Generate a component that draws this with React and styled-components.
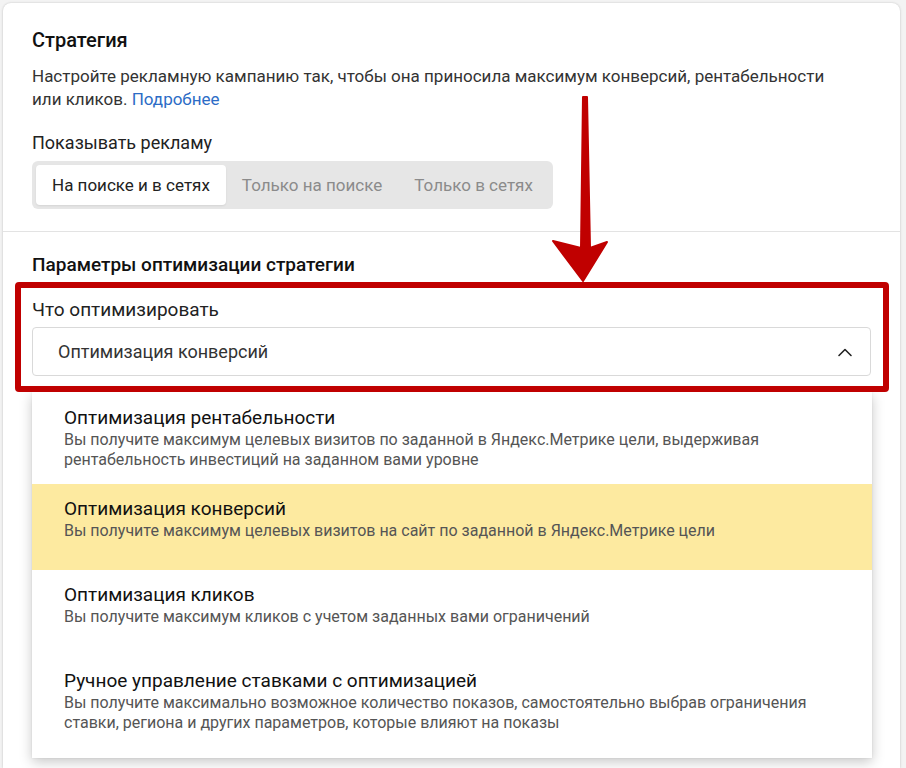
import React from "react";
import styled, { createGlobalStyle } from "styled-components";

const FONT = `Roboto, "Liberation Sans", Arial, sans-serif`;

const GlobalStyle = createGlobalStyle`
  * {
    box-sizing: border-box;
  }

  body {
    margin: 0;
    background-color: #f3f3f3;
    font-family: ${FONT};
    color: #000;
  }
`;

const SHOW_OPTIONS = ["На поиске и в сетях", "Только на поиске", "Только в сетях"];

const GOALS = [
  {
    title: "Оптимизация рентабельности",
    text: "Вы получите максимум целевых визитов по заданной в Яндекс.Метрике цели, выдерживая рентабельность инвестиций на заданном вами уровне",
  },
  {
    title: "Оптимизация конверсий",
    text: "Вы получите максимум целевых визитов на сайт по заданной в Яндекс.Метрике цели",
    selected: true,
  },
  {
    title: "Оптимизация кликов",
    text: "Вы получите максимум кликов с учетом заданных вами ограничений",
  },
  {
    title: "Ручное управление ставками с оптимизацией",
    text: "Вы получите максимально возможное количество показов, самостоятельно выбрав ограничения ставки, региона и других параметров, которые влияют на показы",
  },
];

function ChevronUp() {
  return (
    <svg width="16" height="10" viewBox="0 0 16 10" fill="none">
      <path
        d="M2 8.5L8 2.5L14 8.5"
        stroke="#222"
        strokeWidth="1.6"
        strokeLinecap="round"
        strokeLinejoin="round"
      />
    </svg>
  );
}

function RedArrow() {
  return (
    <Arrow width="60" height="192" viewBox="0 0 60 192">
      <path
        d="M33 5 L37 5 L40 156 L57 150 L33 189 L3 149 L31 156 Z"
        fill="#c00000"
        stroke="#c00000"
        strokeWidth="2"
        strokeLinejoin="round"
      />
    </Arrow>
  );
}

export default function App() {
  return (
    <>
      <GlobalStyle />
      <Page>
        <Card>
          <Section>
            <Heading>Стратегия</Heading>
            <Description>
              Настройте рекламную кампанию так, чтобы она приносила максимум
              конверсий, рентабельности или кликов. <Link href="#">Подробнее</Link>
            </Description>
            <Label>Показывать рекламу</Label>
            <Segmented>
              {SHOW_OPTIONS.map((option, index) => (
                <Segment key={option} $active={index === 0}>
                  {option}
                </Segment>
              ))}
            </Segmented>
          </Section>

          <Section $bottomless>
            <Heading $small>Параметры оптимизации стратегии</Heading>
            <Field>
              <Highlight />
              <Label $large>Что оптимизировать</Label>
              <Select>
                <span>Оптимизация конверсий</span>
                <ChevronUp />
              </Select>
              <Dropdown>
                {GOALS.map((goal) => (
                  <Option key={goal.title} $selected={goal.selected}>
                    <OptionTitle>{goal.title}</OptionTitle>
                    <OptionText>{goal.text}</OptionText>
                  </Option>
                ))}
              </Dropdown>
            </Field>
          </Section>

          <RedArrow />
        </Card>
      </Page>
    </>
  );
}

const Page = styled.div`
  padding: 3px 6px 0 3px;
`;

const Card = styled.div`
  position: relative;
  min-height: 765px;
  background-color: #fff;
  border-radius: 8px 8px 0 0;
  box-shadow: 0 0 2px rgba(0, 0, 0, 0.18), 0 1px 4px rgba(0, 0, 0, 0.06);
`;

const Section = styled.section`
  padding: ${({ $bottomless }) => ($bottomless ? "21px 29px 0" : "25px 29px 22px")};
  border-bottom: ${({ $bottomless }) => ($bottomless ? "none" : "1px solid #e3e3e3")};
`;

const Heading = styled.h2`
  margin: 0;
  font-size: ${({ $small }) => ($small ? "19px" : "20px")};
  line-height: 24px;
  font-weight: 500;
  color: #111;
`;

const Description = styled.p`
  margin: 13px 0 0;
  max-width: 820px;
  font-size: 17px;
  line-height: 23px;
  color: #333;
`;

const Link = styled.a`
  color: #2c6cc6;
  text-decoration: none;
`;

const Label = styled.div`
  margin-top: ${({ $large }) => ($large ? "21px" : "20px")};
  font-size: ${({ $large }) => ($large ? "19px" : "18px")};
  line-height: 24px;
  color: #222;
`;

const Segmented = styled.div`
  display: inline-flex;
  margin-top: 6px;
  padding: 4px;
  background-color: #e6e6e6;
  border-radius: 6px;
`;

const Segment = styled.div`
  display: flex;
  align-items: center;
  height: 40px;
  padding: 0 16px;
  border-radius: 4px;
  font-size: 17px;
  color: ${({ $active }) => ($active ? "#222" : "#8b8b8b")};
  background-color: ${({ $active }) => ($active ? "#fff" : "transparent")};
  box-shadow: ${({ $active }) => ($active ? "0 1px 2px rgba(0, 0, 0, 0.08)" : "none")};
`;

const Field = styled.div`
  position: relative;
`;

const Highlight = styled.div`
  position: absolute;
  top: -16px;
  left: -17px;
  right: -18px;
  bottom: -16px;
  border: 6px solid #c00000;
  border-radius: 4px;
  pointer-events: none;
  z-index: 2;
`;

const Select = styled.div`
  display: flex;
  align-items: center;
  justify-content: space-between;
  height: 49px;
  margin-top: 5px;
  padding: 0 17px 0 25px;
  border: 1px solid #d9d9d9;
  border-radius: 4px;
  font-size: 18px;
  color: #333;
`;

const Dropdown = styled.div`
  position: absolute;
  top: calc(100% + 16px);
  left: 0;
  right: -1px;
  background-color: #fff;
  box-shadow: 0 4px 12px rgba(0, 0, 0, 0.22), 0 0 2px rgba(0, 0, 0, 0.08);
  z-index: 1;
`;

const Option = styled.div`
  min-height: 86px;
  padding: 13px 32px 14px;
  background-color: ${({ $selected }) => ($selected ? "#fdeaa0" : "transparent")};

  &:first-child {
    padding-top: 14px;
  }

  &:last-child {
    min-height: 102px;
    padding-bottom: 24px;
  }
`;

const OptionTitle = styled.div`
  font-size: 19px;
  line-height: 24px;
  color: #111;
`;

const OptionText = styled.div`
  max-width: 770px;
  font-size: 16px;
  line-height: 20px;
  color: #555;
`;

const Arrow = styled.svg`
  position: absolute;
  left: 547px;
  top: 89px;
  z-index: 3;
`;
